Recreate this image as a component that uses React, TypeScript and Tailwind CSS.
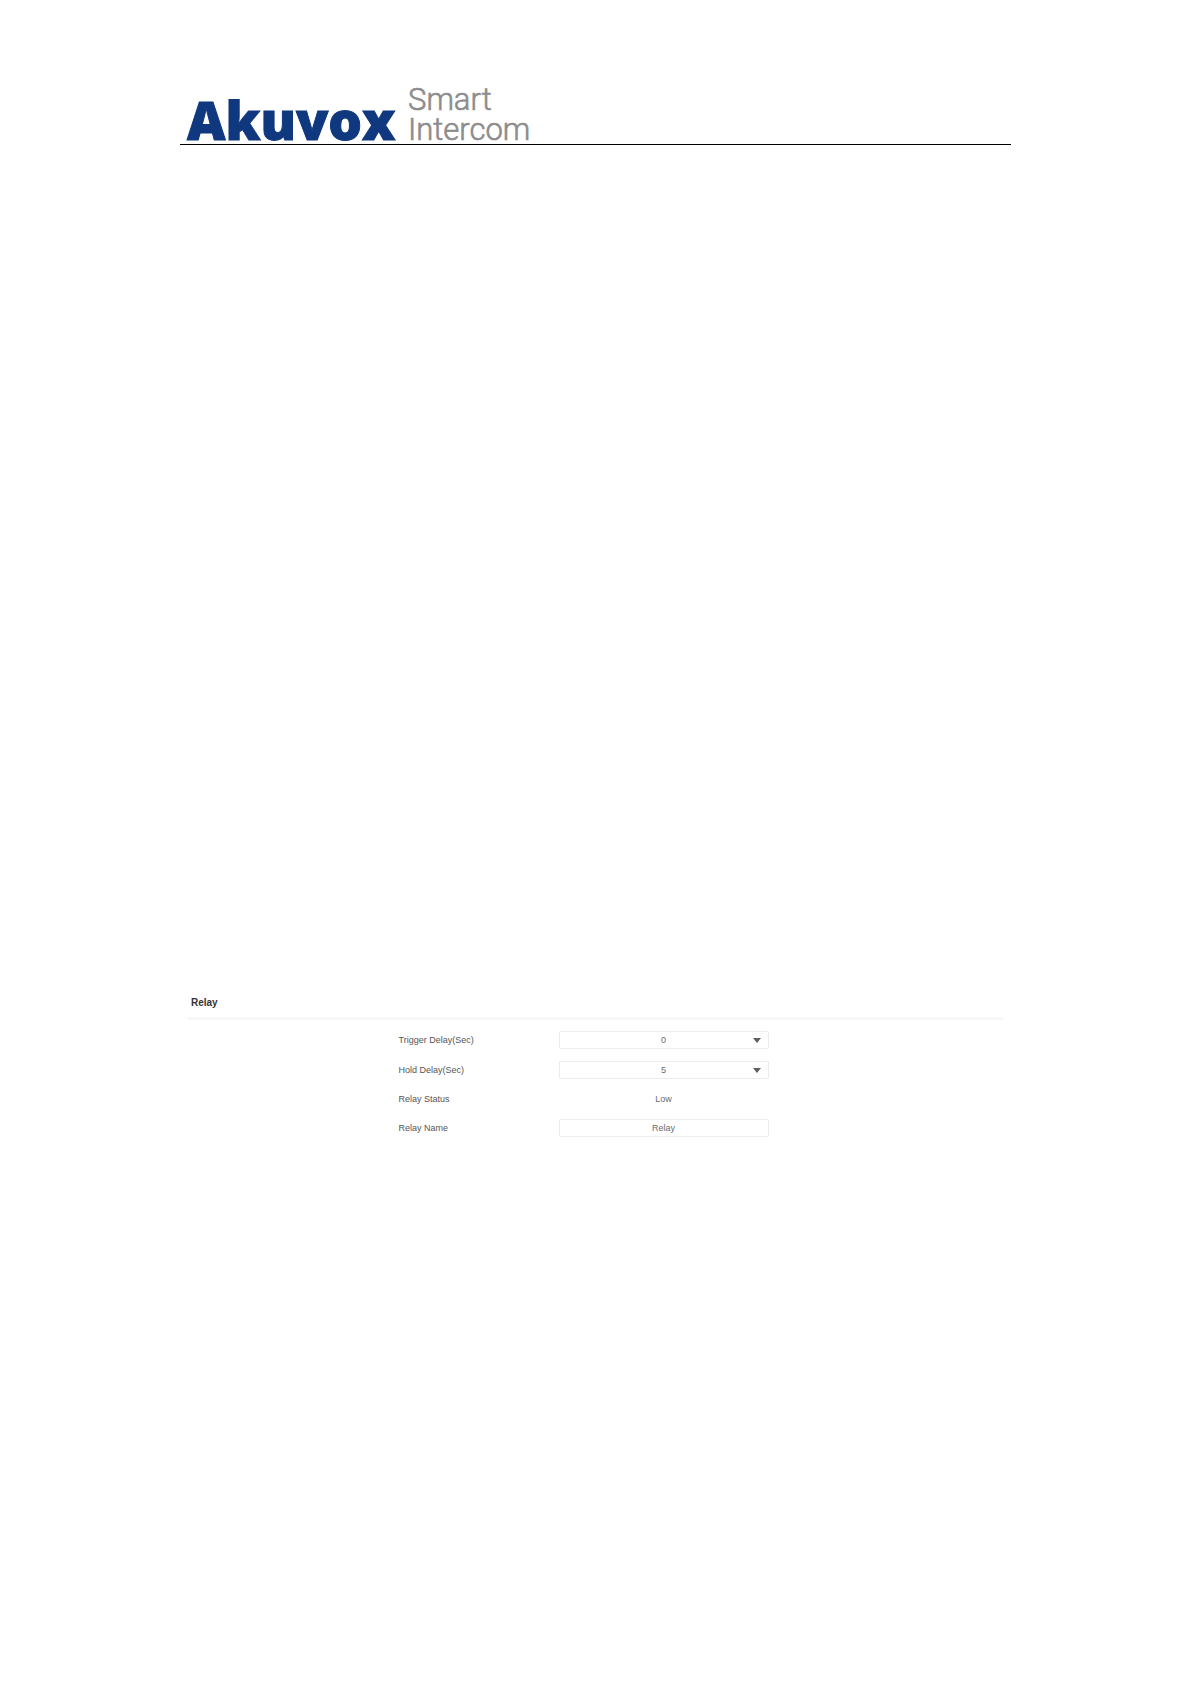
import { useState } from "react";
import type { ReactNode } from "react";

const DELAYS = ["0", "1", "2", "3", "4", "5", "6", "7", "8", "9", "10"];

const BOX =
  "h-[18px] w-full rounded-[1px] border border-[#ececec] bg-white text-center text-[9px] leading-4 text-[#6b6b6b] outline-none focus:border-slate-400";

function Logo() {
  return (
    <svg
      width="360"
      height="64"
      viewBox="0 0 360 64"
      role="img"
      aria-label="Akuvox Smart Intercom"
      className="overflow-visible"
    >
      <text
        x="7"
        y="60"
        fontSize="53"
        fill="#10387f"
        stroke="#10387f"
        strokeWidth="1"
        className="font-['Open_Sans',sans-serif] font-extrabold"
      >
        Akuvox
      </text>
      <g
        fill="#8c8c8c"
        stroke="#8c8c8c"
        strokeWidth="0.6"
        fontSize="31"
        className="font-['Roboto',sans-serif] font-light"
      >
        <text x="228" y="30">
          Smart
        </text>
        <text x="228" y="60">
          Intercom
        </text>
      </g>
    </svg>
  );
}

function Row({
  label,
  htmlFor,
  children,
}: {
  label: string;
  htmlFor: string;
  children: ReactNode;
}) {
  return (
    <div className="flex items-center">
      <label htmlFor={htmlFor} className="w-40 shrink-0 text-[9px] leading-4 text-[#555]">
        {label}
      </label>
      <div className="w-[210px]">{children}</div>
    </div>
  );
}

function DelaySelect({
  id,
  value,
  onChange,
}: {
  id: string;
  value: string;
  onChange: (value: string) => void;
}) {
  return (
    <div className="relative flex">
      <select
        id={id}
        value={value}
        onChange={(e) => onChange(e.target.value)}
        className={`${BOX} appearance-none [text-align-last:center]`}
      >
        {DELAYS.map((d) => (
          <option key={d}>{d}</option>
        ))}
      </select>
      <svg
        width="8"
        height="5"
        viewBox="0 0 8 5"
        className="pointer-events-none absolute top-[7px] right-2"
        aria-hidden
      >
        <path d="M0 0h8L4 5z" fill="#5f5f5f" />
      </svg>
    </div>
  );
}

export default function App() {
  const [triggerDelay, setTriggerDelay] = useState("0");
  const [holdDelay, setHoldDelay] = useState("5");
  const [name, setName] = useState("Relay");

  return (
    <div className="min-h-screen bg-white font-['Liberation_Sans',Arial,sans-serif]">
      <div className="mx-auto max-w-[831px] pt-20 pb-20">
        <header className="flex border-b border-black">
          <Logo />
        </header>

        <main className="px-2 pt-[850px]">
          <h1 className="border-b-3 border-[#f7f7f7] px-[3px] pb-1.5 text-[10px] leading-4 font-bold text-[#333]">
            Relay
          </h1>
          <form
            className="mx-auto mt-[11px] flex w-[394px] flex-col gap-3"
            onSubmit={(e) => e.preventDefault()}
          >
            <Row label="Trigger Delay(Sec)" htmlFor="trigger-delay">
              <DelaySelect id="trigger-delay" value={triggerDelay} onChange={setTriggerDelay} />
            </Row>
            <Row label="Hold Delay(Sec)" htmlFor="hold-delay">
              <DelaySelect id="hold-delay" value={holdDelay} onChange={setHoldDelay} />
            </Row>
            <Row label="Relay Status" htmlFor="relay-status">
              <output
                id="relay-status"
                className="block text-center text-[9px] leading-4 text-[#6b6b6b]"
              >
                Low
              </output>
            </Row>
            <Row label="Relay Name" htmlFor="relay-name">
              <input
                id="relay-name"
                type="text"
                value={name}
                onChange={(e) => setName(e.target.value)}
                className={`${BOX} block`}
              />
            </Row>
          </form>
        </main>
      </div>
    </div>
  );
}
